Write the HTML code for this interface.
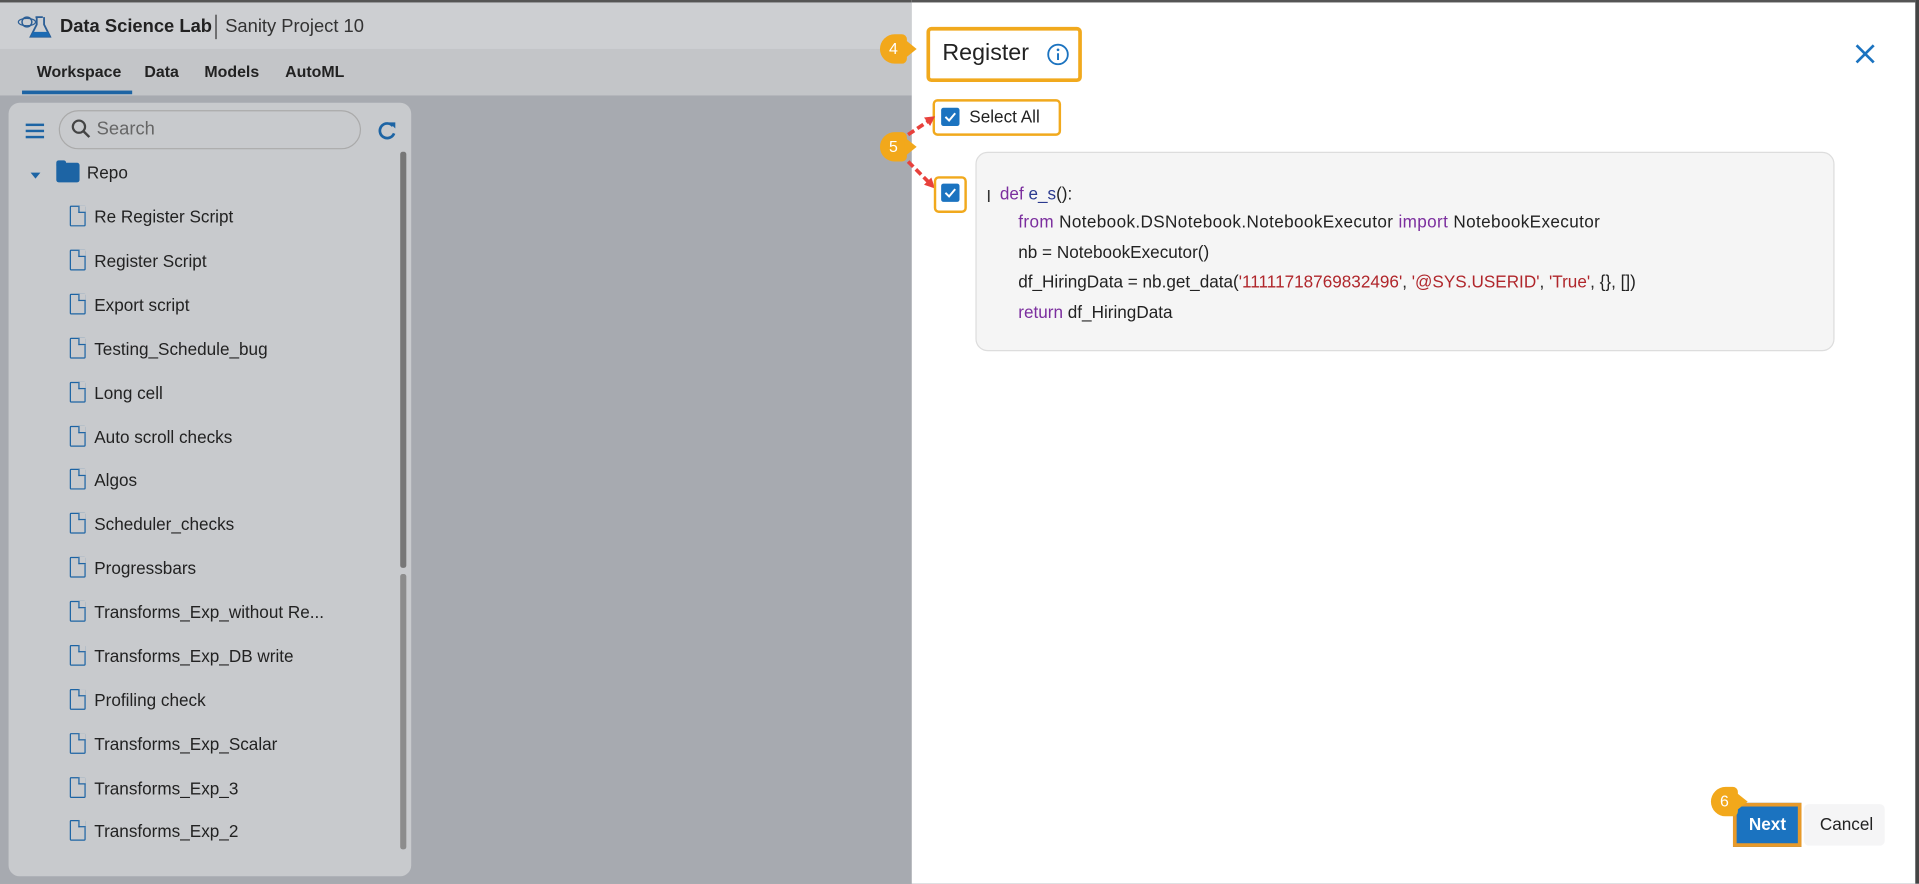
<!DOCTYPE html>
<html><head><meta charset="utf-8"><style>
html,body{margin:0;padding:0;width:1919px;height:884px;overflow:hidden;background:#a9acb1;font-family:"Liberation Sans",sans-serif}
#w{position:absolute;left:0;top:0;width:1568px;height:722px;transform:scale(1.22385);transform-origin:0 0;background:#a7aab0;overflow:hidden}
.a{position:absolute}
.top{left:0;top:0;width:745px;height:40px;background:#cdcfd2;border-top:2px solid #555}
.tabs{left:0;top:40px;width:745px;height:38px;background:#c3c5c8}
.tab{position:absolute;top:11px;font-size:13px;font-weight:bold;color:#222}
.panel{left:7px;top:84px;width:329px;height:632px;background:#c8cacd;border-radius:9px}
.it{position:absolute;left:77px;font-size:14px;color:#222}
.fi{position:absolute;left:57px;width:13px;height:17px;border:1.3px solid #1d64a4;border-radius:1px;box-sizing:border-box}
.fi:after{content:"";position:absolute;right:-1px;top:-1px;width:5px;height:5px;background:#c8cacd;border-left:1.3px solid #1d64a4;border-bottom:1.3px solid #1d64a4}
.modal{left:745px;top:0;width:820px;height:722px;background:#fff;border-top:2px solid #555}
.ob{position:absolute;border:3px solid #f1a91d;border-radius:4px;box-sizing:border-box}
.badge{position:absolute;width:22px;height:24px;background:#f2a81b;border-radius:12px 4px 4px 12px;color:#fff;font-size:13px;text-align:center;line-height:24px}
.badge:after{content:"";position:absolute;right:-8px;top:4px;border-left:10px solid #f2a81b;border-top:8px solid transparent;border-bottom:8px solid transparent}
.cb{position:absolute;width:15px;height:15px;background:#1b73c0;border-radius:2px}
.code{position:absolute;font-size:14px;color:#222;white-space:pre}
.k{color:#7b2e9e}.s{color:#b0262b}
</style></head><body><div id="w">
<div class="a top">
<svg class="a" style="left:14px;top:6px" width="28" height="26" viewBox="0 0 28 26"><circle cx="8" cy="10" r="4" fill="none" stroke="#2c5f96" stroke-width="1.2"/><ellipse cx="8" cy="10" rx="7" ry="3" fill="none" stroke="#2c5f96" stroke-width="1"/><path d="M15 6h6M16 6v6l-5 10h16l-5-10V6" fill="none" stroke="#2c5f96" stroke-width="1.5"/><path d="M13 18h12l2 4H11z" fill="#1c6bb3"/></svg>
<div class="a" style="left:49px;top:11px;font-size:15px;font-weight:bold;color:#222">Data Science Lab</div>
<div class="a" style="left:176px;top:10px;width:1px;height:20px;background:#333"></div>
<div class="a" style="left:184px;top:11px;font-size:15px;color:#333">Sanity Project 10</div>
</div>
<div class="a tabs">
<span class="tab" style="left:30px">Workspace</span><span class="tab" style="left:118px">Data</span><span class="tab" style="left:167px">Models</span><span class="tab" style="left:233px">AutoML</span>
<div class="a" style="left:18px;top:34px;width:90px;height:3px;background:#1d64a4"></div>
</div>
<div class="a panel">
<div class="a" style="left:14px;top:17px;width:15px;height:2px;background:#1d64a4;box-shadow:0 5px #1d64a4,0 10px #1d64a4"></div>
<div class="a" style="left:41px;top:6px;width:247px;height:32px;border:1px solid #aaa;border-radius:16px;box-sizing:border-box"></div>
<svg class="a" style="left:51px;top:13px" width="16" height="16"><circle cx="6.5" cy="6.5" r="5" fill="none" stroke="#444" stroke-width="1.8"/><path d="M10 10l5 5" stroke="#444" stroke-width="2"/></svg>
<div class="a" style="left:72px;top:13px;font-size:15px;color:#666">Search</div>
<svg class="a" style="left:300px;top:14px" width="18" height="18" viewBox="0 0 18 18"><path d="M14 5A6 6 0 1 0 15 11" fill="none" stroke="#1d64a4" stroke-width="2.2"/><path d="M11 2h5v5z" fill="#1d64a4"/></svg>
<div class="a" style="left:320px;top:40px;width:5px;height:340px;background:#777;border-radius:2px"></div>
<div class="a" style="left:320px;top:385px;width:5px;height:225px;background:#8c8c8c;border-radius:2px"></div>
</div>
<div class="a" style="left:25px;top:141px;border-top:5px solid #1d64a4;border-left:4px solid transparent;border-right:4px solid transparent"></div>
<div class="a" style="left:46px;top:133px;width:19px;height:16px;background:#1d64a4;border-radius:2px"></div>
<div class="a" style="left:46px;top:131px;width:8px;height:4px;background:#1d64a4;border-radius:2px 2px 0 0"></div>
<div class="it" style="left:71px;top:133px">Repo</div>
<div class="fi" style="top:168px"></div><div class="it" style="top:169px">Re Register Script</div>
<div class="fi" style="top:204px"></div><div class="it" style="top:205px">Register Script</div>
<div class="fi" style="top:240px"></div><div class="it" style="top:241px">Export script</div>
<div class="fi" style="top:276px"></div><div class="it" style="top:277px">Testing_Schedule_bug</div>
<div class="fi" style="top:312px"></div><div class="it" style="top:313px">Long cell</div>
<div class="fi" style="top:348px"></div><div class="it" style="top:349px">Auto scroll checks</div>
<div class="fi" style="top:383px"></div><div class="it" style="top:384px">Algos</div>
<div class="fi" style="top:419px"></div><div class="it" style="top:420px">Scheduler_checks</div>
<div class="fi" style="top:455px"></div><div class="it" style="top:456px">Progressbars</div>
<div class="fi" style="top:491px"></div><div class="it" style="top:492px">Transforms_Exp_without Re...</div>
<div class="fi" style="top:527px"></div><div class="it" style="top:528px">Transforms_Exp_DB write</div>
<div class="fi" style="top:563px"></div><div class="it" style="top:564px">Profiling check</div>
<div class="fi" style="top:599px"></div><div class="it" style="top:600px">Transforms_Exp_Scalar</div>
<div class="fi" style="top:635px"></div><div class="it" style="top:636px">Transforms_Exp_3</div>
<div class="fi" style="top:670px"></div><div class="it" style="top:671px">Transforms_Exp_2</div>

<div class="a modal"></div>
<div class="a" style="left:1565px;top:0;width:3px;height:722px;background:#444"></div>
<div class="ob" style="left:757px;top:22px;width:127px;height:45px"></div>
<div class="a" style="left:770px;top:33px;font-size:19px;color:#222">Register</div>
<svg class="a" style="left:855px;top:35px" width="19" height="19"><circle cx="9.5" cy="9.5" r="8" fill="none" stroke="#1b73c0" stroke-width="1.5"/><circle cx="9.5" cy="5.7" r="1.1" fill="#1b73c0"/><path d="M9.5 8.5v5.5" stroke="#1b73c0" stroke-width="1.6"/></svg>
<div class="badge" style="left:719px;top:28px">4</div>
<svg class="a" style="left:1515px;top:35px" width="18" height="18"><path d="M2 2l14 14M16 2L2 16" stroke="#1b73c0" stroke-width="2.2"/></svg>
<div class="ob" style="left:762px;top:81px;width:105px;height:30px;border-width:2px"></div>
<div class="cb" style="left:769px;top:88px"></div>
<svg class="a" style="left:769px;top:88px" width="15" height="15"><path d="M3.5 7.5l3 3 5-6" fill="none" stroke="#fff" stroke-width="1.6"/></svg>
<div class="a" style="left:792px;top:87px;font-size:14px;color:#222">Select All</div>
<div class="badge" style="left:719px;top:108px">5</div>
<svg class="a" style="left:720px;top:90px" width="60" height="80"><path d="M22 20L40 8" stroke="#e8413c" stroke-width="3" stroke-dasharray="6 3"/><path d="M44 5l-9 1 5 7z" fill="#e8413c"/><path d="M22 42L40 60" stroke="#e8413c" stroke-width="3" stroke-dasharray="6 3"/><path d="M44 64l-3-9-6 6z" fill="#e8413c"/></svg>
<div class="a" style="left:797px;top:124px;width:702px;height:163px;background:#f5f5f5;border:1px solid #ddd;border-radius:10px;box-sizing:border-box"></div>
<div class="ob" style="left:763px;top:144px;width:27px;height:30px;border-width:2px"></div>
<div class="cb" style="left:769px;top:150px"></div>
<svg class="a" style="left:769px;top:150px" width="15" height="15"><path d="M3.5 7.5l3 3 5-6" fill="none" stroke="#fff" stroke-width="1.6"/></svg>
<div class="code" style="left:806px;top:152px;color:#333">I</div>
<div class="code" style="left:817px;top:150px"><span class="k">def</span> <span style="color:#2b3a8f">e_s</span>():</div>
<div class="code" style="left:832px;top:173px;letter-spacing:0.3px"><span class="k">from</span> Notebook.DSNotebook.NotebookExecutor <span class="k">import</span> NotebookExecutor</div>
<div class="code" style="left:832px;top:198px">nb = NotebookExecutor()</div>
<div class="code" style="left:832px;top:222px">df_HiringData = nb.get_data(<span class="s">'11111718769832496'</span>, <span class="s">'@SYS.USERID'</span>, <span class="s">'True'</span>, {}, [])</div>
<div class="code" style="left:832px;top:247px"><span class="k">return</span> df_HiringData</div>
<div class="a" style="left:1474px;top:657px;width:66px;height:34px;background:#f5f5f6;border-radius:4px"></div>
<div class="a" style="left:1487px;top:665px;font-size:14px;color:#222">Cancel</div>
<div class="a" style="left:1416px;top:656px;width:56px;height:36px;background:#1b73c0;border:3px solid #e89a2a;box-sizing:border-box"></div>
<div class="a" style="left:1429px;top:665px;font-size:14px;font-weight:bold;color:#fff">Next</div>
<div class="badge" style="left:1398px;top:643px">6</div>
</div></body></html>
